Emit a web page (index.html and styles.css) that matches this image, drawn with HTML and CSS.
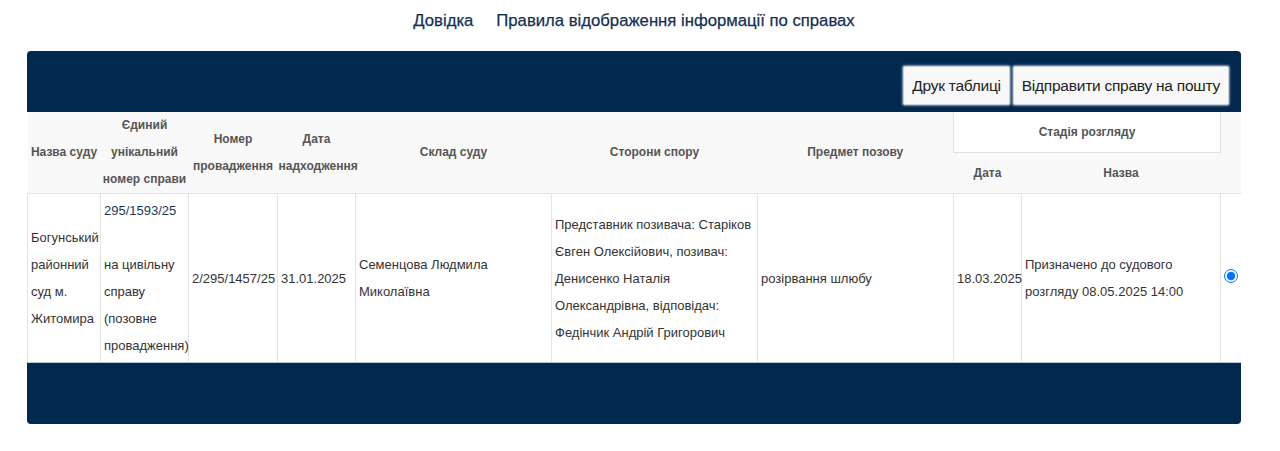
FILE: index.html
```html
<!DOCTYPE html>
<html lang="uk">
<head>
<meta charset="utf-8">
<title>Справи</title>
<link rel="stylesheet" href="styles.css">
</head>
<body>
<nav class="top-links">
  <a href="#" class="top-link">Довідка</a>
  <a href="#" class="top-link">Правила відображення інформації по справах</a>
</nav>
<div class="panel">
  <div class="panel-head">
    <button class="btn">Друк таблиці</button>
    <button class="btn">Відправити справу на пошту</button>
  </div>
  <table class="cases">
    <colgroup>
      <col class="c1"><col class="c2"><col class="c3"><col class="c4"><col class="c5">
      <col class="c6"><col class="c7"><col class="c8"><col class="c9"><col class="c10">
    </colgroup>
    <thead>
      <tr>
        <th rowspan="2">Назва суду</th>
        <th rowspan="2">Єдиний унікальний номер справи</th>
        <th rowspan="2">Номер провадження</th>
        <th rowspan="2">Дата надходження</th>
        <th rowspan="2">Склад суду</th>
        <th rowspan="2">Сторони спору</th>
        <th rowspan="2">Предмет позову</th>
        <th colspan="2" class="stage">Стадія розгляду</th>
        <th rowspan="2"></th>
      </tr>
      <tr>
        <th class="sub">Дата</th>
        <th class="sub">Назва</th>
      </tr>
    </thead>
    <tbody>
      <tr>
        <td>Богунський районний суд м. Житомира</td>
        <td><a href="#" class="case-link">295/1593/25</a><br><br>на цивільну справу (позовне провадження)</td>
        <td>2/295/1457/25</td>
        <td>31.01.2025</td>
        <td>Семенцова Людмила Миколаївна</td>
        <td>Представник позивача: Старіков Євген Олексійович, позивач: Денисенко Наталія Олександрівна, відповідач: Федінчик Андрій Григорович</td>
        <td>розірвання шлюбу</td>
        <td>18.03.2025</td>
        <td>Призначено до судового розгляду 08.05.2025 14:00</td>
        <td class="radio-cell"><input type="radio" name="case" checked></td>
      </tr>
    </tbody>
  </table>
  <div class="panel-foot"></div>
</div>
</body>
</html>
```

FILE: styles.css
```css
body {
  margin: 0;
  font-family: "Liberation Sans", Arial, sans-serif;
  background: #fff;
  color: #333;
}

.top-links {
  display: flex;
  justify-content: center;
  gap: 23px;
  height: 51px;
  padding-top: 11px;
  box-sizing: border-box;
  margin-left: -12px;
}

.top-link {
  color: #142f55;
  text-decoration: none;
  font-size: 16.7px;
  line-height: 20px;
  -webkit-text-stroke: 0.25px #142f55;
}

.panel {
  margin-left: 27px;
  width: 1214px;
  border-radius: 4px;
  overflow: hidden;
  background: #fff;
}

.panel-head {
  background: #01284f;
  height: 61px;
  display: flex;
  justify-content: flex-end;
  align-items: flex-start;
  gap: 3px;
  padding: 15px 12px 0 0;
  box-sizing: border-box;
}

.btn {
  font-family: "Liberation Sans", Arial, sans-serif;
  font-size: 15.5px;
  letter-spacing: -0.25px;
  line-height: 19px;
  color: #222;
  background: #f8f8f8;
  border: 1px solid #c9d0d8;
  border-radius: 2px;
  padding: 9px 8px;
  box-shadow: 0 0 2px 1px rgba(170, 185, 205, 0.8);
}

.cases {
  width: 100%;
  table-layout: fixed;
  border-collapse: collapse;
  font-size: 13px;
}

.c1 { width: 73px; }
.c2 { width: 88px; }
.c3 { width: 89px; }
.c4 { width: 78px; }
.c5 { width: 196px; }
.c6 { width: 206px; }
.c7 { width: 196px; }
.c8 { width: 68px; }
.c9 { width: 199px; }
.c10 { width: 21px; }

.cases th {
  background: #f9f9f9;
  color: #555;
  font-weight: bold;
  font-size: 12px;
  line-height: 27px;
  padding: 0 1px;
  text-align: center;
  vertical-align: middle;
}

.cases th.stage {
  background: #fff;
  border: 1px solid #e0e0e0;
  border-top: none;
  height: 40px;
  padding: 0;
}

.cases th.sub {
  height: 40px;
  padding: 0;
}

.cases td {
  border: 1px solid #e4e4e4;
  border-bottom: none;
  padding: 3px 3px;
  line-height: 27px;
  vertical-align: middle;
  color: #333;
}

.case-link {
  color: #1b3a5e;
  text-decoration: none;
}

.radio-cell {
  text-align: center;
  padding: 0 !important;
}

.radio-cell input {
  margin: 0;
  width: 14px;
  height: 14px;
}

.panel-foot {
  background: #01284f;
  height: 61px;
  border-top: 1px solid #b7c3d0;
}
```
